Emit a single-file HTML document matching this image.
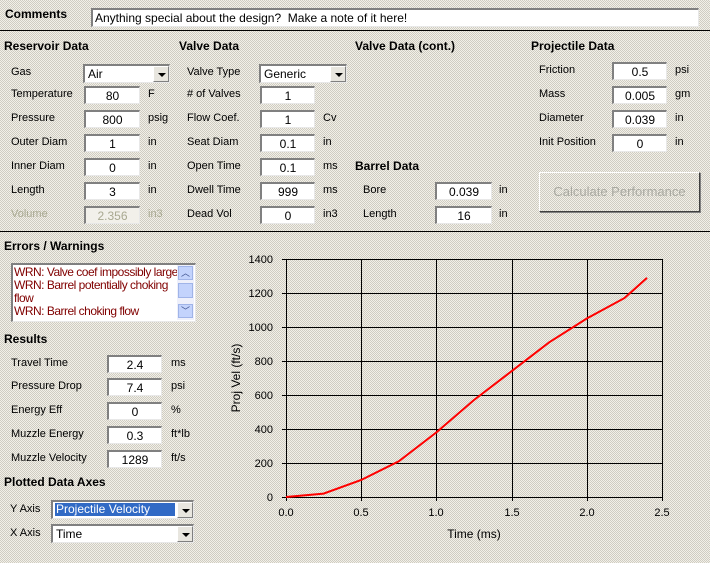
<!DOCTYPE html>
<html><head><style>
*{margin:0;padding:0;box-sizing:border-box}
body{width:710px;height:563px;position:relative;overflow:hidden;font-family:"Liberation Sans",sans-serif;font-size:11px;color:#000;
background-color:#e2dfd6;background-image:repeating-conic-gradient(#f2f0e8 0 25%,#cfccc2 0 50%);background-size:2px 2px}
.a{position:absolute;white-space:nowrap}
.h{position:absolute;font-weight:bold;font-size:12px;white-space:nowrap}
.in{position:absolute;background:#fff;border-top:2px solid #808080;border-left:2px solid #808080;border-right:1px solid #e8e8e8;border-bottom:1px solid #e8e8e8;text-align:center;height:18px;line-height:16px;font-size:12px}
.dd{position:absolute;background:#fff;border-top:2px solid #808080;border-left:2px solid #808080;border-right:1px solid #e8e8e8;border-bottom:1px solid #e8e8e8;height:19px;line-height:16px;font-size:12px;padding-left:3px}
.dd b{position:absolute;right:0;top:0;width:16px;height:16px;background:#e8e6df;border:1px solid;border-color:#fff #808080 #808080 #fff}
.dd b:after{content:"";position:absolute;left:4px;top:6px;border-left:4px solid transparent;border-right:4px solid transparent;border-top:4px solid #000}
.line{position:absolute;left:0;width:710px;height:1px;background:#000}
</style></head><body>
<div class="h" style="left:5px;top:7px">Comments</div>
<div class="in" style="left:91px;top:8px;width:608px;height:19px;text-align:left;padding-left:2px">Anything special about the design?&nbsp; Make a note of it here!</div>
<div class="line" style="top:30px"></div>

<div class="h" style="left:4px;top:39px">Reservoir Data</div>
<div class="h" style="left:179px;top:39px">Valve Data</div>
<div class="h" style="left:355px;top:39px">Valve Data (cont.)</div>
<div class="h" style="left:531px;top:39px">Projectile Data</div>

<div class="a" style="left:11px;top:66px">Gas</div>
<div class="dd" style="left:83px;top:64px;width:87px">Air<b></b></div>
<div class="a" style="left:11px;top:88px">Temperature</div><div class="in" style="left:84px;top:86px;width:56px">80</div><div class="a" style="left:148px;top:88px">F</div>
<div class="a" style="left:11px;top:112px">Pressure</div><div class="in" style="left:84px;top:110px;width:56px">800</div><div class="a" style="left:148px;top:112px">psig</div>
<div class="a" style="left:11px;top:136px">Outer Diam</div><div class="in" style="left:84px;top:134px;width:56px">1</div><div class="a" style="left:148px;top:136px">in</div>
<div class="a" style="left:11px;top:160px">Inner Diam</div><div class="in" style="left:84px;top:158px;width:56px">0</div><div class="a" style="left:148px;top:160px">in</div>
<div class="a" style="left:11px;top:184px">Length</div><div class="in" style="left:84px;top:182px;width:56px">3</div><div class="a" style="left:148px;top:184px">in</div>
<div class="a" style="left:11px;top:208px;color:#a8a890">Volume</div><div class="in" style="left:84px;top:206px;width:56px;color:#a8a890;background:#f2f0ea">2.356</div><div class="a" style="left:148px;top:208px;color:#a8a890">in3</div>

<div class="a" style="left:187px;top:66px">Valve Type</div>
<div class="dd" style="left:259px;top:64px;width:88px">Generic<b></b></div>
<div class="a" style="left:187px;top:88px"># of Valves</div><div class="in" style="left:260px;top:86px;width:55px">1</div>
<div class="a" style="left:187px;top:112px">Flow Coef.</div><div class="in" style="left:260px;top:110px;width:55px">1</div><div class="a" style="left:323px;top:112px">Cv</div>
<div class="a" style="left:187px;top:136px">Seat Diam</div><div class="in" style="left:260px;top:134px;width:55px">0.1</div><div class="a" style="left:323px;top:136px">in</div>
<div class="a" style="left:187px;top:160px">Open Time</div><div class="in" style="left:260px;top:158px;width:55px">0.1</div><div class="a" style="left:323px;top:160px">ms</div>
<div class="a" style="left:187px;top:184px">Dwell Time</div><div class="in" style="left:260px;top:182px;width:55px">999</div><div class="a" style="left:323px;top:184px">ms</div>
<div class="a" style="left:187px;top:208px">Dead Vol</div><div class="in" style="left:260px;top:206px;width:55px">0</div><div class="a" style="left:323px;top:208px">in3</div>

<div class="h" style="left:355px;top:159px">Barrel Data</div>
<div class="a" style="left:363px;top:184px">Bore</div><div class="in" style="left:435px;top:182px;width:57px">0.039</div><div class="a" style="left:499px;top:184px">in</div>
<div class="a" style="left:363px;top:208px">Length</div><div class="in" style="left:435px;top:206px;width:57px">16</div><div class="a" style="left:499px;top:208px">in</div>

<div class="a" style="left:539px;top:64px">Friction</div><div class="in" style="left:612px;top:62px;width:55px">0.5</div><div class="a" style="left:675px;top:64px">psi</div>
<div class="a" style="left:539px;top:88px">Mass</div><div class="in" style="left:612px;top:86px;width:55px">0.005</div><div class="a" style="left:675px;top:88px">gm</div>
<div class="a" style="left:539px;top:112px">Diameter</div><div class="in" style="left:612px;top:110px;width:55px">0.039</div><div class="a" style="left:675px;top:112px">in</div>
<div class="a" style="left:539px;top:136px">Init Position</div><div class="in" style="left:612px;top:134px;width:55px">0</div><div class="a" style="left:675px;top:136px">in</div>

<div class="a" style="left:539px;top:172px;width:161px;height:40px;border:1px solid;border-color:#fff #404040 #404040 #fff;box-shadow:1px 1px 0 #808080;color:#a8a8a0;font-size:13px;text-align:center;line-height:37px">Calculate Performance</div>

<div class="line" style="top:231px"></div>

<div class="h" style="left:4px;top:239px">Errors / Warnings</div>
<div class="a" style="left:11px;top:263px;width:185px;height:59px;background:#fff;border-top:2px solid #808080;border-left:2px solid #808080;border-right:1px solid #e8e8e8;border-bottom:1px solid #e8e8e8;color:#800000;font-size:12px;letter-spacing:-0.5px;line-height:13px;padding-left:1px;padding-top:1px;overflow:hidden">WRN: Valve coef impossibly large<br>WRN: Barrel potentially choking<br>flow<br>WRN: Barrel choking flow</div>
<div class="a" style="left:177px;top:265px;width:17px;height:55px;background:#eef0fb"></div>
<div class="a" style="left:178px;top:266px;width:15px;height:14px;background:#c3d3fc;border:1px solid #a0b4e8;font-size:9px;text-align:center;line-height:12px;color:#3a4e8c">︿</div>
<div class="a" style="left:178px;top:283px;width:15px;height:15px;background:#c3d3fc;border:1px solid #a0b4e8"></div>
<div class="a" style="left:178px;top:304px;width:15px;height:14px;background:#c3d3fc;border:1px solid #a0b4e8;font-size:9px;text-align:center;line-height:12px;color:#3a4e8c">﹀</div>

<div class="h" style="left:4px;top:332px">Results</div>
<div class="a" style="left:11px;top:357px">Travel Time</div><div class="in" style="left:107px;top:355px;width:55px">2.4</div><div class="a" style="left:171px;top:357px">ms</div>
<div class="a" style="left:11px;top:380px">Pressure Drop</div><div class="in" style="left:107px;top:378px;width:55px">7.4</div><div class="a" style="left:171px;top:380px">psi</div>
<div class="a" style="left:11px;top:404px">Energy Eff</div><div class="in" style="left:107px;top:402px;width:55px">0</div><div class="a" style="left:171px;top:404px">%</div>
<div class="a" style="left:11px;top:428px">Muzzle Energy</div><div class="in" style="left:107px;top:426px;width:55px">0.3</div><div class="a" style="left:171px;top:428px">ft*lb</div>
<div class="a" style="left:11px;top:452px">Muzzle Velocity</div><div class="in" style="left:107px;top:450px;width:55px">1289</div><div class="a" style="left:171px;top:452px">ft/s</div>

<div class="h" style="left:4px;top:475px">Plotted Data Axes</div>
<div class="a" style="left:10px;top:503px">Y Axis</div>
<div class="dd" style="left:51px;top:500px;width:143px;padding:1px 18px 1px 2px"><span style="display:block;background:#316ac5;color:#fff;height:13px;line-height:13px;padding-left:1px">Projectile Velocity</span><b></b></div>
<div class="a" style="left:10px;top:527px">X Axis</div>
<div class="dd" style="left:51px;top:524px;width:143px">Time<b></b></div>

<svg class="a" style="left:0;top:0" width="710" height="563" font-family="Liberation Sans, sans-serif" font-size="11">
<g stroke="#000" stroke-width="1" fill="none">
<path d="M286.5 259V497M361.5 259V497M436.5 259V497M512.5 259V497M587.5 259V497M662.5 259V497"/>
<path d="M286 259.5H662M286 293.5H662M286 327.5H662M286 361.5H662M286 395.5H662M286 429.5H662M286 463.5H662M286 497.5H662"/>
<path d="M282 259.5H286M282 293.5H286M282 327.5H286M282 361.5H286M282 395.5H286M282 429.5H286M282 463.5H286M282 497.5H286"/>
<path d="M286.5 497V501M361.5 497V501M436.5 497V501M512.5 497V501M587.5 497V501M662.5 497V501"/>
</g>
<g text-anchor="end">
<text x="273" y="263">1400</text><text x="273" y="297">1200</text><text x="273" y="331">1000</text><text x="273" y="365">800</text><text x="273" y="399">600</text><text x="273" y="433">400</text><text x="273" y="467">200</text><text x="273" y="501">0</text>
</g>
<g text-anchor="middle">
<text x="286" y="516">0.0</text><text x="361" y="516">0.5</text><text x="436" y="516">1.0</text><text x="512" y="516">1.5</text><text x="587" y="516">2.0</text><text x="662" y="516">2.5</text>
<text x="474" y="538" font-size="12">Time (ms)</text>
<text transform="translate(240 378) rotate(-90)" font-size="12">Proj Vel (ft/s)</text>
</g>
<polyline fill="none" stroke="#ff0000" stroke-width="2" points="286,497 323.6,493.6 361.2,480 398.8,461.3 436.4,432.4 474,400 511.6,371.2 549.2,342.3 586.8,318.5 624.4,298.1 647,277.9"/>
</svg>
</body></html>
